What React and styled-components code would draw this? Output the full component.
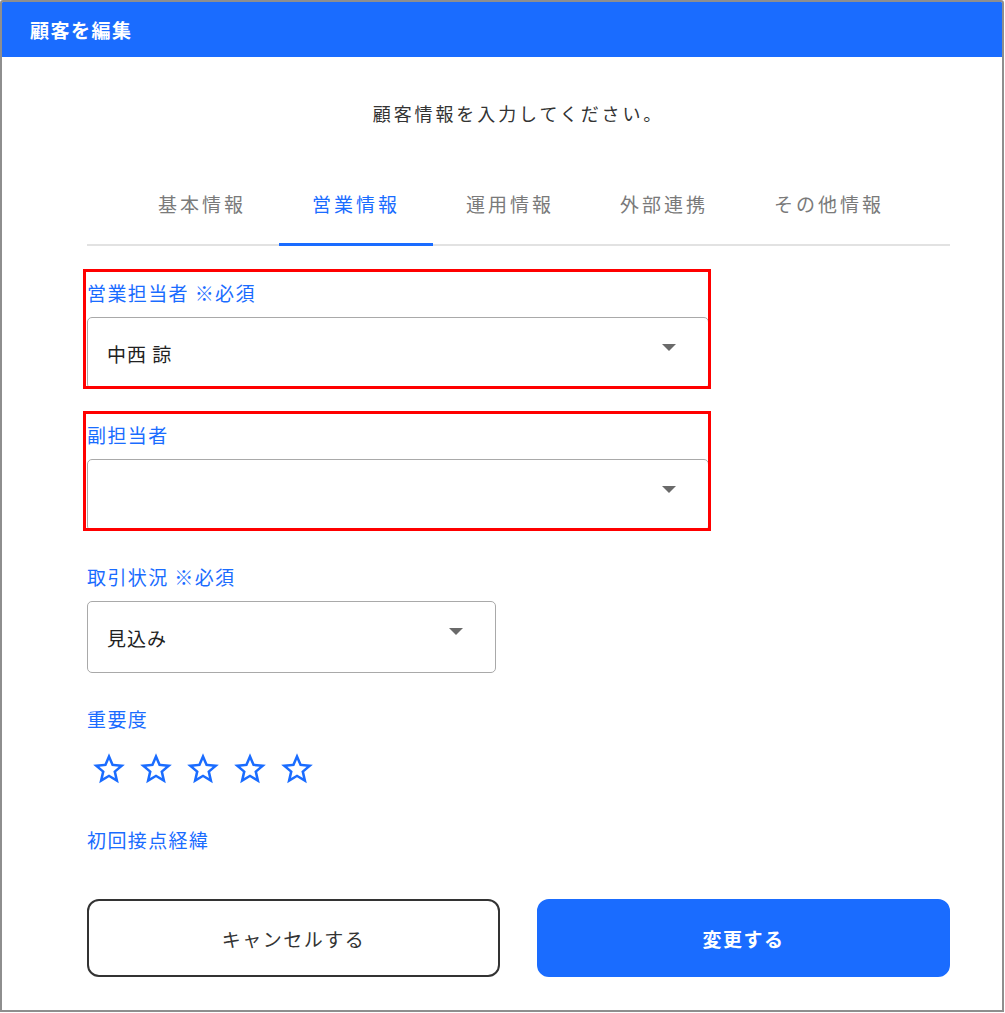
import React from "react";
import styled, { createGlobalStyle } from "styled-components";

const GlobalStyle = createGlobalStyle`
  html, body { margin: 0; padding: 0; background: #ffffff; }
  body { font-family: "Noto Sans CJK JP", "Noto Sans", sans-serif; }
  * { box-sizing: border-box; }
`;

const BLUE = "#1a6cff";

const Frame = styled.div`
  width: 1004px;
  height: 1012px;
  border: 2px solid #8e8e8e;
  border-radius: 3px 3px 0 0;
  overflow: hidden;
  display: flex;
  flex-direction: column;
  background: #fff;
`;

const Header = styled.header`
  height: 55px;
  flex: none;
  background: ${BLUE};
  display: flex;
  align-items: center;
  padding-left: 28px;
  color: #fff;
  font-size: 19px;
  font-weight: 700;
  letter-spacing: 1.5px;
`;

const Body = styled.main`
  padding: 0 52px 0 85px;
  display: flex;
  flex-direction: column;
`;

const Subtitle = styled.p`
  margin: 42px 0 0;
  line-height: 28px;
  font-size: 18px;
  letter-spacing: 2.9px;
  color: #333;
  text-align: center;
`;

const TabBar = styled.nav`
  margin-top: 52px;
  display: flex;
  padding-left: 38px;
  border-bottom: 2px solid #e2e2e2;
`;

const Tab = styled.div`
  padding: 11px 33px 25px;
  line-height: 28px;
  font-size: 19px;
  letter-spacing: 3px;
  color: ${(p) => (p.$active ? BLUE : "#7a7a7a")};
  border-bottom: 3px solid ${(p) => (p.$active ? BLUE : "transparent")};
  margin-bottom: -2px;
  white-space: nowrap;
`;

const Form = styled.div`
  margin-top: 33px;
  display: flex;
  flex-direction: column;
  gap: 32px;
`;

const Field = styled.div`
  position: relative;
  width: ${(p) => p.$width}px;
  display: flex;
  flex-direction: column;
`;

const Label = styled.div`
  line-height: 28px;
  font-size: 19px;
  letter-spacing: 1.4px;
  color: ${BLUE};
  margin-bottom: ${(p) => (p.$tight ? 0 : 10)}px;
`;

const Select = styled.div`
  height: 72px;
  border: 1px solid #a9a9a9;
  border-radius: 5px;
  padding: 0 32px 0 19px;
  display: flex;
  align-items: center;
  justify-content: space-between;
  font-size: 19px;
  letter-spacing: 1px;
  color: #222;
`;

const Arrow = styled.span`
  width: 0;
  height: 0;
  border-left: 7px solid transparent;
  border-right: 7px solid transparent;
  border-top: 7px solid #6a6a6a;
  margin-top: -12px;
`;

const Highlight = styled.div`
  position: absolute;
  top: -10px;
  left: -4px;
  right: -2px;
  bottom: 0;
  border: 3px solid #ff0000;
  pointer-events: none;
`;

const Stars = styled.div`
  display: flex;
  gap: 9px;
  margin: 17px 0 6px 3px;
`;

const StarIcon = () => (
  <svg width="38" height="38" viewBox="0 0 24 24" fill={BLUE}>
    <path d="M22 9.24l-7.19-.62L12 2 9.19 8.63 2 9.24l5.46 4.73L5.82 21 12 17.27 18.18 21l-1.63-7.03L22 9.24zM12 15.4l-3.76 2.27 1-4.28-3.32-2.88 4.38-.38L12 6.1l1.71 4.04 4.38.38-3.32 2.88 1 4.28L12 15.4z" />
  </svg>
);

const Buttons = styled.div`
  margin-top: 45px;
  display: grid;
  grid-template-columns: 413px 413px;
  justify-content: space-between;
`;

const Button = styled.button`
  height: 78px;
  border-radius: 12px;
  font-family: inherit;
  font-size: 19px;
  letter-spacing: 1.5px;
  cursor: pointer;
  border: 2px solid ${(p) => (p.$primary ? BLUE : "#333")};
  background: ${(p) => (p.$primary ? BLUE : "#fff")};
  color: ${(p) => (p.$primary ? "#fff" : "#333")};
  font-weight: ${(p) => (p.$primary ? 700 : 400)};
`;

const tabs = ["基本情報", "営業情報", "運用情報", "外部連携", "その他情報"];

export default function App() {
  return (
    <>
      <GlobalStyle />
      <Frame>
        <Header>顧客を編集</Header>
        <Body>
          <Subtitle>顧客情報を入力してください。</Subtitle>
          <TabBar>
            {tabs.map((t, i) => (
              <Tab key={t} $active={i === 1}>
                {t}
              </Tab>
            ))}
          </TabBar>
          <Form>
            <Field $width={622}>
              <Label>営業担当者 ※必須</Label>
              <Select>
                <span>中西 諒</span>
                <Arrow />
              </Select>
              <Highlight />
            </Field>
            <Field $width={622}>
              <Label>副担当者</Label>
              <Select>
                <span></span>
                <Arrow />
              </Select>
              <Highlight />
            </Field>
            <Field $width={409}>
              <Label>取引状況 ※必須</Label>
              <Select>
                <span>見込み</span>
                <Arrow />
              </Select>
            </Field>
            <Field $width={400}>
              <Label $tight>重要度</Label>
              <Stars>
                {[0, 1, 2, 3, 4].map((i) => (
                  <StarIcon key={i} />
                ))}
              </Stars>
            </Field>
            <Field $width={400}>
              <Label $tight>初回接点経緯</Label>
            </Field>
          </Form>
          <Buttons>
            <Button>キャンセルする</Button>
            <Button $primary>変更する</Button>
          </Buttons>
        </Body>
      </Frame>
    </>
  );
}
